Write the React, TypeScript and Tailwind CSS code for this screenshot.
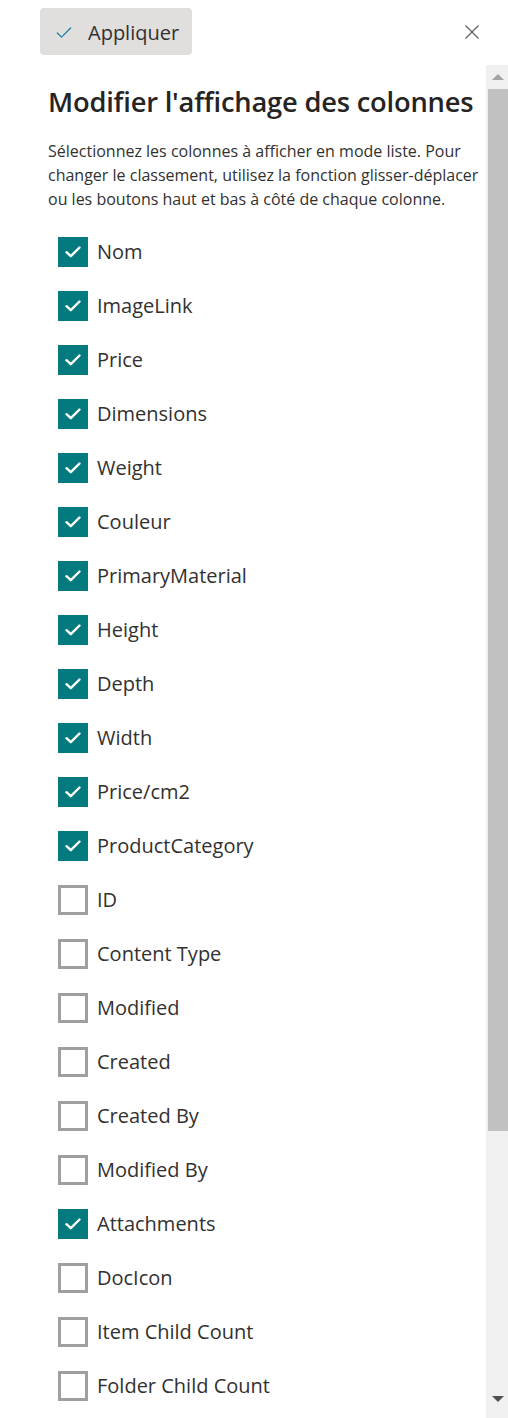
import { Check, X } from "lucide-react";

const columns: { name: string; checked: boolean }[] = [
  { name: "Nom", checked: true },
  { name: "ImageLink", checked: true },
  { name: "Price", checked: true },
  { name: "Dimensions", checked: true },
  { name: "Weight", checked: true },
  { name: "Couleur", checked: true },
  { name: "PrimaryMaterial", checked: true },
  { name: "Height", checked: true },
  { name: "Depth", checked: true },
  { name: "Width", checked: true },
  { name: "Price/cm2", checked: true },
  { name: "ProductCategory", checked: true },
  { name: "ID", checked: false },
  { name: "Content Type", checked: false },
  { name: "Modified", checked: false },
  { name: "Created", checked: false },
  { name: "Created By", checked: false },
  { name: "Modified By", checked: false },
  { name: "Attachments", checked: true },
  { name: "DocIcon", checked: false },
  { name: "Item Child Count", checked: false },
  { name: "Folder Child Count", checked: false },
];

function Box({ checked }: { checked: boolean }) {
  if (checked) {
    return (
      <span className="flex h-[30px] w-[30px] shrink-0 items-center justify-center bg-[#037b7e]">
        <svg width="16" height="12" viewBox="0 0 16 12" fill="none">
          <path d="M1.5 6.2 L5.8 10.2 L14.5 1.5" stroke="white" strokeWidth="2.4" strokeLinecap="round" strokeLinejoin="round" />
        </svg>
      </span>
    );
  }
  return <span className="h-[30px] w-[30px] shrink-0 border-[3px] border-[#a19f9d] bg-white" />;
}

export default function App() {
  return (
    <div
      className="flex h-[1418px] w-[508px] flex-col overflow-hidden bg-white text-[#323130]"
      style={{ fontFamily: '"Open Sans", "Noto Sans", sans-serif' }}
    >
      <header className="flex h-[65px] shrink-0 items-start justify-between pl-10 pr-[24px] pt-2">
        <button
          type="button"
          className="flex h-[47px] w-[152px] items-center gap-[14px] rounded bg-[#e1dfdd] pl-[14px] pt-[2px] text-[20px] text-[#323130]"
        >
          <Check size={20} strokeWidth={1.5} className="text-[#1c7fa6]" />
          Appliquer
        </button>
        <X size={24} strokeWidth={1.2} className="mt-[12px] text-[#605e5c]" />
      </header>

      <div className="flex min-h-0 flex-1">
        <div className="flex-1 pl-12 pr-2">
          <h2 className="mt-[19px] whitespace-nowrap text-[27.3px] font-semibold leading-[36px] tracking-[-0.2px] text-[#252423]">
            Modifier l'affichage des colonnes
          </h2>
          <p className="mt-[19px] whitespace-nowrap text-[16px] leading-[24px] text-[#323130]">
            Sélectionnez les colonnes à afficher en mode liste. Pour
            <br />
            changer le classement, utilisez la fonction glisser-déplacer
            <br />
            ou les boutons haut et bas à côté de chaque colonne.
          </p>
          <ul className="mt-[14px] flex flex-col pl-[10px]">
            {columns.map((c) => (
              <li key={c.name} className="flex h-[54px] items-center gap-[9px]">
                <Box checked={c.checked} />
                <span className="text-[20px] text-[#323130]">{c.name}</span>
              </li>
            ))}
          </ul>
        </div>

        <div className="mr-[1px] flex w-[23px] shrink-0 flex-col bg-[#f0f0f0]">
          <div className="flex h-[24px] items-center justify-center">
            <span className="h-0 w-0 border-x-[6px] border-b-[6px] border-x-transparent border-b-[#a3a3a3]" />
          </div>
          <div className="ml-[2px] h-[1042px] bg-[#c1c1c1]" />
          <div className="flex-1" />
          <div className="flex h-[22px] items-start justify-center">
            <span className="h-0 w-0 border-x-[6px] border-t-[6px] border-x-transparent border-t-[#505050]" />
          </div>
        </div>
      </div>
    </div>
  );
}
